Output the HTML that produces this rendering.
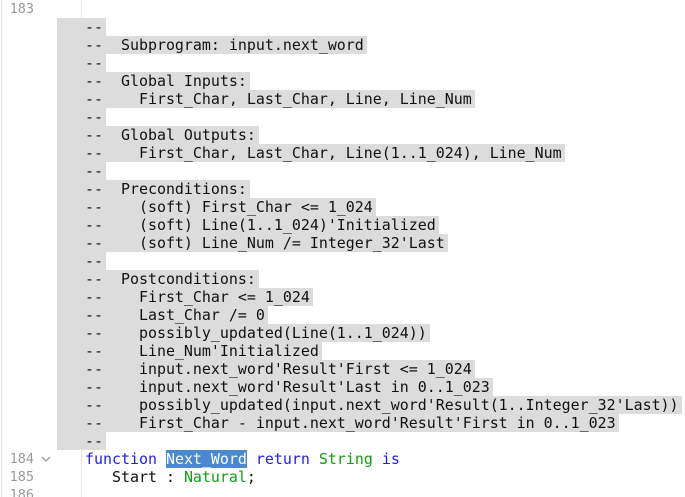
<!DOCTYPE html>
<html><head><meta charset="utf-8"><style>
html,body{margin:0;padding:0;background:#fff;width:685px;height:497px;overflow:hidden;position:relative}
.m{font-family:"DejaVu Sans Mono","Liberation Mono",monospace;font-size:14.95px;white-space:pre;}
.row{position:absolute;left:0;height:18px;line-height:18px;width:685px}
.ln{position:absolute;left:0;width:34px;text-align:right;color:#999;font-size:13.5px}
.c{position:absolute;left:57px;padding-left:28px;padding-right:3px;background:#dcdcdc;color:#111}
.t{position:absolute;left:85px;color:#111}
.k{color:#2020e8}.g{color:#10a010}
.sel{background:#4a88d0;color:#fff}
#gut{position:absolute;left:81px;top:0;width:1px;height:497px;background:#e6e6e6}
#lb{position:absolute;left:1px;top:0;width:1px;height:497px;background:#e4e4e4}
</style></head><body>
<div id="lb"></div><div id="gut"></div>
<div class="m" style="position:absolute;top:1px;left:0">
<div class="row" style="top:-1px"><span class="ln">183</span></div>
<div class="row" style="top:17px"><span class="c">--</span></div>
<div class="row" style="top:35px"><span class="c">--  Subprogram: input.next_word</span></div>
<div class="row" style="top:53px"><span class="c">--</span></div>
<div class="row" style="top:71px"><span class="c">--  Global Inputs:</span></div>
<div class="row" style="top:89px"><span class="c">--    First_Char, Last_Char, Line, Line_Num</span></div>
<div class="row" style="top:107px"><span class="c">--</span></div>
<div class="row" style="top:125px"><span class="c">--  Global Outputs:</span></div>
<div class="row" style="top:143px"><span class="c">--    First_Char, Last_Char, Line(1..1_024), Line_Num</span></div>
<div class="row" style="top:161px"><span class="c">--</span></div>
<div class="row" style="top:179px"><span class="c">--  Preconditions:</span></div>
<div class="row" style="top:197px"><span class="c">--    (soft) First_Char &lt;= 1_024</span></div>
<div class="row" style="top:215px"><span class="c">--    (soft) Line(1..1_024)'Initialized</span></div>
<div class="row" style="top:233px"><span class="c">--    (soft) Line_Num /= Integer_32'Last</span></div>
<div class="row" style="top:251px"><span class="c">--</span></div>
<div class="row" style="top:269px"><span class="c">--  Postconditions:</span></div>
<div class="row" style="top:287px"><span class="c">--    First_Char &lt;= 1_024</span></div>
<div class="row" style="top:305px"><span class="c">--    Last_Char /= 0</span></div>
<div class="row" style="top:323px"><span class="c">--    possibly_updated(Line(1..1_024))</span></div>
<div class="row" style="top:341px"><span class="c">--    Line_Num'Initialized</span></div>
<div class="row" style="top:359px"><span class="c">--    input.next_word'Result'First &lt;= 1_024</span></div>
<div class="row" style="top:377px"><span class="c">--    input.next_word'Result'Last in 0..1_023</span></div>
<div class="row" style="top:395px"><span class="c">--    possibly_updated(input.next_word'Result(1..Integer_32'Last))</span></div>
<div class="row" style="top:413px"><span class="c">--    First_Char - input.next_word'Result'First in 0..1_023</span></div>
<div class="row" style="top:431px"><span class="c">--</span></div>
<div class="row" style="top:449px"><span class="ln">184</span><svg style="position:absolute;left:41px;top:5px" width="10" height="8"><path d="M1 2 L5 6 L9 2" fill="none" stroke="#999" stroke-width="1.3"/></svg><span class="t"><span class="k">function</span> <span class="sel">Next_Word</span> <span class="k">return</span> <span class="g">String</span> <span class="k">is</span></span></div>
<div class="row" style="top:467px"><span class="ln">185</span><span class="t">   Start : <span class="g">Natural</span>;</span></div>
<div class="row" style="top:485px"><span class="ln">186</span></div>
</div>
</body></html>
